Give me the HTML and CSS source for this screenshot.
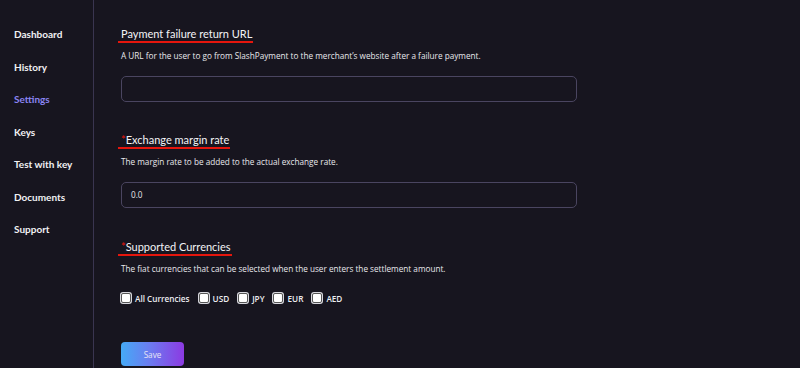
FILE: index.html
```html
<!DOCTYPE html>
<html>
<head>
<meta charset="utf-8">
<link rel="stylesheet" href="styles.css">
</head>
<body>
<div class="page">
  <nav class="sidebar">
    <a class="nav-item">Dashboard</a>
    <a class="nav-item">History</a>
    <a class="nav-item active">Settings</a>
    <a class="nav-item">Keys</a>
    <a class="nav-item">Test with key</a>
    <a class="nav-item">Documents</a>
    <a class="nav-item">Support</a>
  </nav>
  <main class="content">
    <section class="field">
      <div class="field-title">Payment failure return URL</div>
      <p class="field-desc">A URL for the user to go from SlashPayment to the merchant’s website after a failure payment.</p>
      <div class="input"></div>
    </section>
    <section class="field">
      <div class="field-title"><span class="req">*</span>Exchange margin rate</div>
      <p class="field-desc">The margin rate to be added to the actual exchange rate.</p>
      <div class="input">0.0</div>
    </section>
    <section class="field">
      <div class="field-title"><span class="req">*</span>Supported Currencies</div>
      <p class="field-desc">The fiat currencies that can be selected when the user enters the settlement amount.</p>
      <div class="checks">
        <label class="check"><span class="box"></span>All Currencies</label>
        <label class="check"><span class="box"></span>USD</label>
        <label class="check"><span class="box"></span>JPY</label>
        <label class="check"><span class="box"></span>EUR</label>
        <label class="check"><span class="box"></span>AED</label>
      </div>
    </section>
    <button class="save">Save</button>
  </main>
</div>
</body>
</html>
```
FILE: styles.css
```css
* { box-sizing: border-box; }
html, body { margin: 0; padding: 0; background: #17151f; }
body { font-family: "Open Sans", "Noto Sans", sans-serif; color: #f2f2f5; }
.page { display: flex; height: 368px; overflow: hidden; }
.sidebar {
  width: 94px;
  flex: none;
  border-right: 1px solid #3a3550;
  display: flex;
  flex-direction: column;
  padding-top: 26px;
}
.nav-item {
  display: block;
  padding-left: 14px;
  height: 32.5px;
  line-height: 16px;
  font-family: "Lato", sans-serif;
  font-size: 10px;
  font-weight: 700;
  color: #f1f1f4;
}
.nav-item.active { color: #8a84f2; }
.content {
  flex: 1;
  padding: 26px 0 0 27px;
  display: flex;
  flex-direction: column;
  align-items: flex-start;
}
.field {
  width: 456px;
  display: flex;
  flex-direction: column;
  align-items: stretch;
}
.field:nth-of-type(1) { margin-bottom: 30px; }
.field:nth-of-type(2) { margin-bottom: 31px; }
.field-title {
  align-self: flex-start;
  margin-left: -3px;
  padding: 0 1px 0 3px;
  font-family: "Lato", sans-serif;
  font-size: 11px;
  line-height: 15px;
  color: #f3f3f6;
  border-bottom: 2px solid #e5160d;
}
.req { color: #e5160d; }
.field-desc {
  margin: 7px 0 0;
  font-size: 8.2px;
  line-height: 12px;
  color: #e8e8ec;
}
.input {
  margin-top: 14px;
  height: 26px;
  border: 1px solid #4a4560;
  border-radius: 5px;
  padding-left: 9px;
  font-size: 8.2px;
  line-height: 24px;
  color: #e8e8ec;
}
.checks {
  margin-top: 17px;
  display: flex;
  align-items: center;
  gap: 9px;
  height: 12px;
}
.check {
  display: flex;
  align-items: center;
  gap: 4px;
  font-size: 8.2px;
  font-weight: 600;
  color: #ededf1;
}
.box {
  width: 10px;
  height: 10px;
  background: #ffffff;
  border: 1.5px solid #555;
  border-radius: 2px;
  box-shadow: 0 0 0 1px #d8d8de;
}
.save {
  margin-top: 38px;
  width: 63px;
  height: 24px;
  border: none;
  border-radius: 4px;
  background: linear-gradient(90deg, #45aaf6 0%, #6b7cf0 45%, #8c3ae2 100%);
  color: #e6e4f5;
  font-family: inherit;
  font-size: 8.2px;
  padding: 0;
  flex: none;
}
```
